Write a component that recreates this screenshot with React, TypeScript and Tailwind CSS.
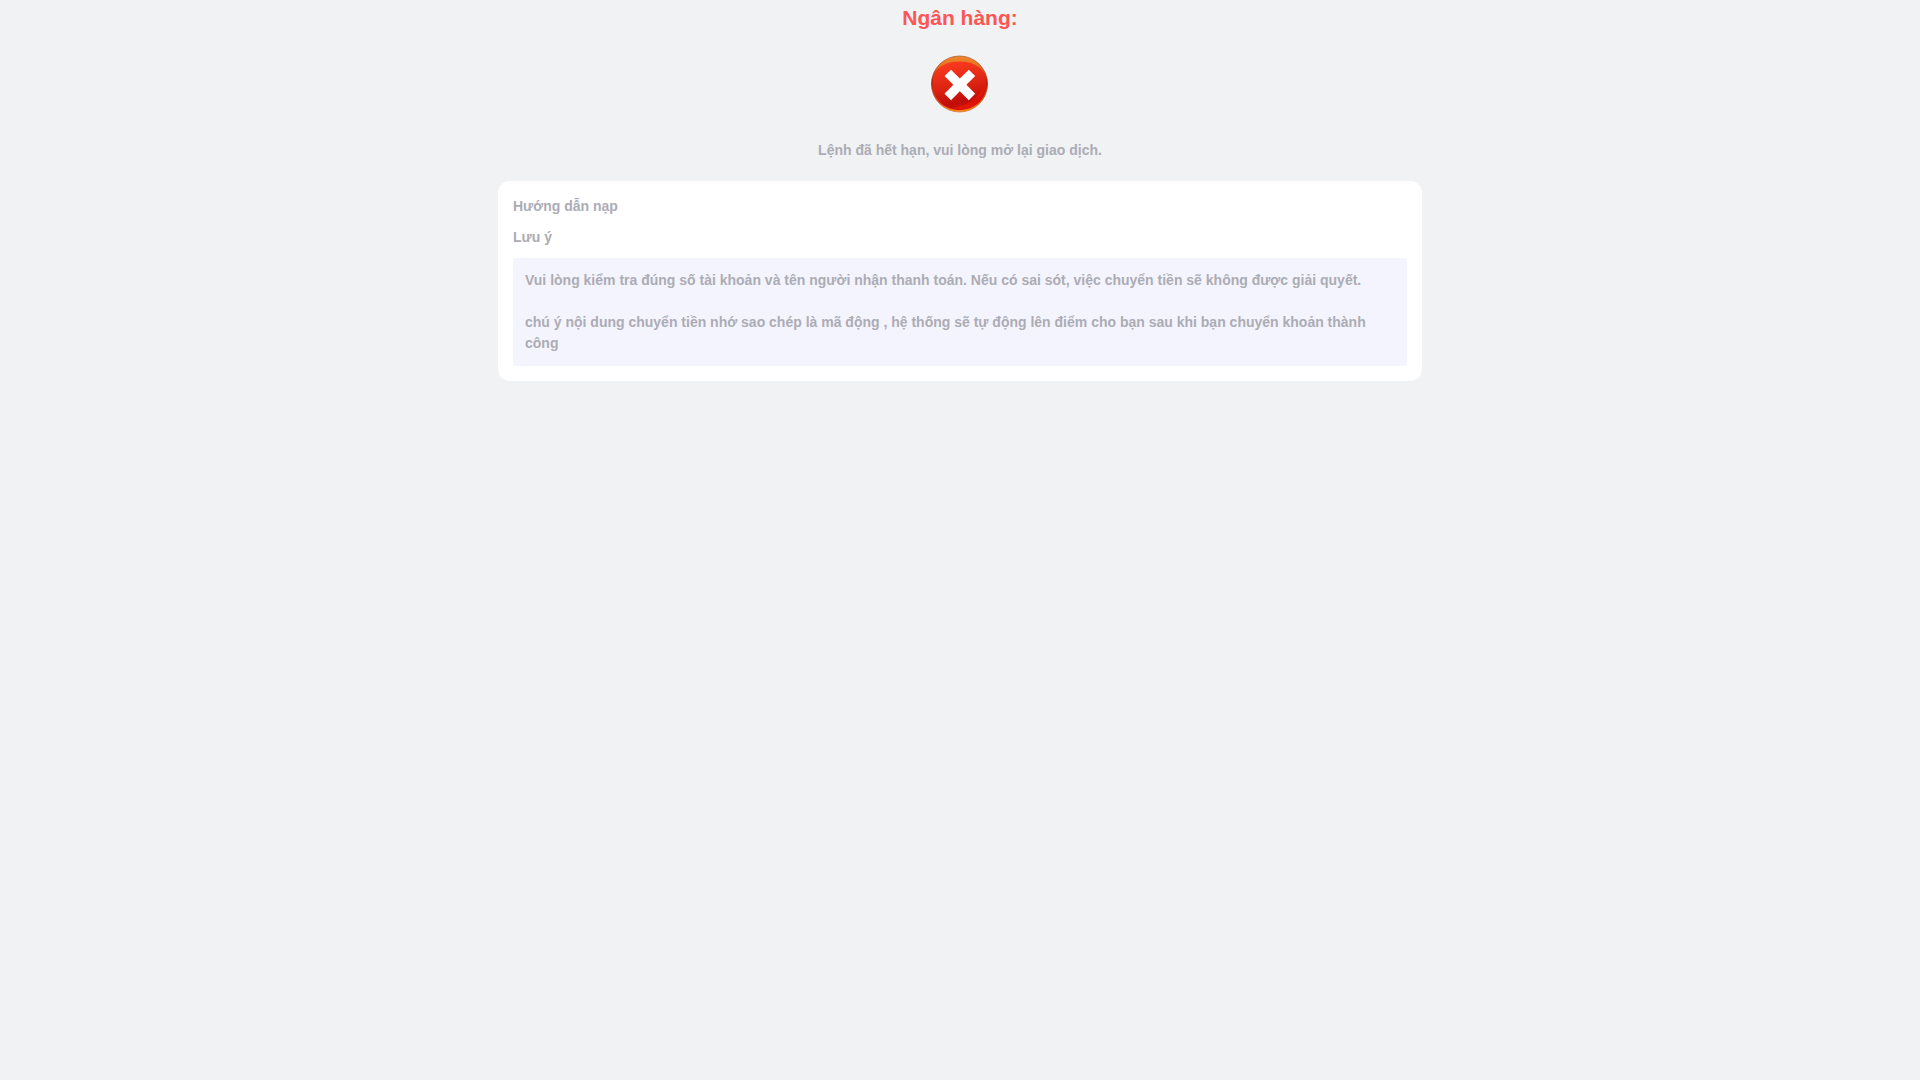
function ErrorIcon() {
  return (
    <svg className="size-[60px]" viewBox="0 0 60 60" role="img" aria-label="Lỗi">
      <defs>
        <linearGradient id="rim" x1="0" y1="0" x2="0" y2="1">
          <stop offset="0" stopColor="#ee8a2c" />
          <stop offset="0.18" stopColor="#e8701c" />
          <stop offset="0.45" stopColor="#b51a0c" />
          <stop offset="0.7" stopColor="#d8340a" />
          <stop offset="1" stopColor="#fb8a10" />
        </linearGradient>
        <linearGradient id="face" x1="0.4" y1="0" x2="0.6" y2="1">
          <stop offset="0" stopColor="#fb3a20" />
          <stop offset="0.5" stopColor="#dc2412" />
          <stop offset="0.85" stopColor="#c00c08" />
          <stop offset="1" stopColor="#e01405" />
        </linearGradient>
        <linearGradient id="edge" x1="0" y1="0" x2="0" y2="1">
          <stop offset="0" stopColor="#b5603a" />
          <stop offset="0.5" stopColor="#a82a16" />
          <stop offset="1" stopColor="#d87838" />
        </linearGradient>
      </defs>
      <circle cx="29.5" cy="30" r="28" fill="url(#rim)" stroke="url(#edge)" strokeWidth="0.8" />
      <path
        d="M29.5 7.5C42 7.5 50 12 54.2 19.5C56 23 56.5 27 56.2 31C55.5 46 44 56 29.5 56C15 56 3.5 46 2.8 31C2.5 27 3 23 4.8 19.5C9 12 17 7.5 29.5 7.5Z"
        fill="url(#face)"
      />
      <path d="M54.8 24C54 40 42 51 22 53.8C41 60 58 45 54.8 24Z" fill="#f01808" opacity="0.55" />
      <path
        d="M14.5 22L21 15.7L29.8 24.5L38.8 15.7L45.2 22L36.4 30.8L45.2 39.8L38.8 46.2L29.8 37.3L21 46.2L14.5 39.8L23.3 30.8Z"
        fill="#fff"
      />
    </svg>
  );
}

export default function App() {
  return (
    <main
      lang="vi"
      className="flex min-h-screen flex-col items-center bg-[#f0f2f4] px-4 font-['Liberation_Sans',Arial,sans-serif] text-sm leading-[21px] font-bold text-[#acacb4]"
    >
      <h1 className="text-[21px] leading-9 text-[#ff5555]">Ngân hàng:</h1>
      <div className="mt-[18px]">
        <ErrorIcon />
      </div>
      <p className="mt-[26px] text-center">Lệnh đã hết hạn, vui lòng mở lại giao dịch.</p>
      <section className="mt-5 flex w-full max-w-[924px] flex-col gap-2.5 rounded-xl bg-white p-[15px]">
        <h2>Hướng dẫn nạp</h2>
        <h3>Lưu ý</h3>
        <div className="flex flex-col gap-[21px] bg-[#f4f4ff] p-3">
          <p>
            Vui lòng kiểm tra đúng số tài khoản và tên người nhận thanh toán. Nếu có sai sót, việc
            chuyển tiền sẽ không được giải quyết.
          </p>
          <p>
            chú ý nội dung chuyển tiền nhớ sao chép là mã động , hệ thống sẽ tự động lên điểm cho
            bạn sau khi bạn chuyển khoản thành công
          </p>
        </div>
      </section>
    </main>
  );
}
